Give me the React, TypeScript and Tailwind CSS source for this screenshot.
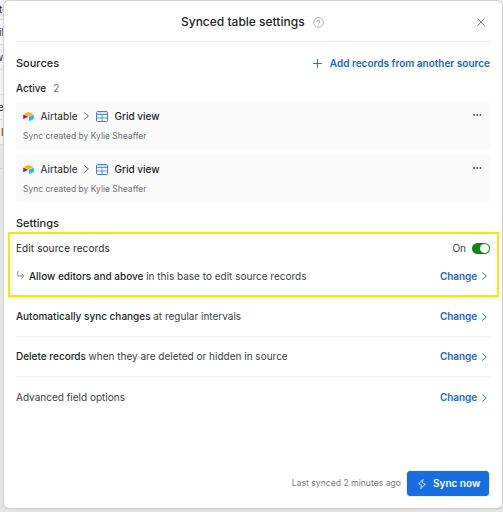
import React from 'react';

interface SourceCardProps {
  base: string;
  view: string;
  author: string;
}

interface SettingRowProps {
  strong?: string;
  text: string;
}

const gridRows = [
  { id: 1, text: 'to', cell: 'h-[20px] -ml-px' },
  { id: 2, text: 'il', cell: 'h-[25px] -ml-px' },
  { id: 3, text: 'w', cell: 'h-[25px] -ml-[5px]' },
  { id: 4, text: '', cell: 'h-[25px]' },
  { id: 5, text: 'e', cell: 'h-[25px] -ml-[2px]' },
  { id: 6, text: 'l', cell: 'h-[25px] pl-px' },
];

const AirtableLogo: React.FC = () => (
  <svg className="w-[11px] h-[9px]" viewBox="0 0 200 170">
    <path fill="#fcb400" d="M90 4 16 35c-4 2-4 8 0 9l75 30c6 3 14 3 20 0l75-30c4-1 4-7 0-9L111 4c-7-3-14-3-21 0" />
    <path fill="#18bfff" d="M106 89v74c0 4 3 6 7 5l83-33c2-1 4-3 4-5V56c0-4-4-6-7-5l-83 33c-2 1-4 3-4 5" />
    <path fill="#dc0436" d="m88 93-25 12-55 26c-3 2-8 0-8-4V57c0-4 5-7 9-5l77 32c5 2 6 7 2 9" />
  </svg>
);

const GridIcon: React.FC = () => (
  <svg className="w-3 h-[11px]" viewBox="0 0 12 11" fill="none" stroke="#3b82dc">
    <path d="M.6.6h10.8v3H.6z" fill="#cfe3fb" stroke="none" />
    <rect x=".5" y=".5" width="11" height="10" rx="1" />
    <path d="M.6 3.5h10.8M.6 7h10.8M6 3.7v6.7" strokeWidth=".8" />
  </svg>
);

const Chevron: React.FC<{ className?: string }> = ({ className }) => (
  <svg className={`w-[5px] h-2 ${className}`} viewBox="0 0 5 8" fill="none" stroke="currentColor" strokeWidth=".9" strokeLinecap="round" strokeLinejoin="round">
    <path d="M.6.7 4.3 4 .6 7.3" />
  </svg>
);

const SourceCard: React.FC<SourceCardProps> = ({ base, view, author }) => (
  <div className="h-[47px] px-[7px] pt-[6px] rounded-[2px] bg-[#fafafa]">
    <div className="flex items-center h-4">
      <AirtableLogo />
      <span className="ml-[6.5px] w-[37px] text-[10px] tracking-[0.05px] text-[#1d1f25]">{base}</span>
      <Chevron className="ml-[6.5px] text-[#555]" />
      <span className="ml-[7px]"><GridIcon /></span>
      <span className="ml-[6.5px] text-[10px] font-medium text-[#1d1f25]">{view}</span>
      <button className="ml-auto mb-[3px] mr-px">
        <svg className="w-[9px] h-[2px]" viewBox="0 0 9 2" fill="#333">
          <path d="M.2.2h1.6v1.6H.2zM3.5.2h1.6v1.6H3.5zM6.6.2h1.6v1.6H6.6z" />
        </svg>
      </button>
    </div>
    <p className="mt-[6px] leading-[13px] text-[8.5px] text-[#707276]">Sync created by {author}</p>
  </div>
);

const ChangeButton: React.FC = () => (
  <button className="flex items-center ml-auto mr-[3.5px] text-[10px] font-semibold tracking-[-0.1px] text-[#1566cf]">
    Change
    <Chevron className="ml-[4.5px]" />
  </button>
);

const SettingRow: React.FC<SettingRowProps> = ({ strong, text }) => (
  <div className="flex items-center flex-1 text-[10px] text-[#3c3e43]">
    <p>
      {strong && <span className="font-medium text-[#1d1f25]">{strong} </span>}
      {text}
    </p>
    <ChangeButton />
  </div>
);

const App: React.FC = () => {
  return (
    <div className="relative w-[503px] h-[512px] overflow-hidden bg-[#e6e6e6] font-['Inter',sans-serif] text-[#1d1f25]">
      {/* Table behind the dialog */}
      <div className="bg-[#f2f2f2]">
        {gridRows.map(row => (
          <div key={row.id} className={`flex items-center border-b border-[#dcdcdc] text-[10px] ${row.cell}`}>
            {row.text}
          </div>
        ))}
      </div>
      <div className="h-6 border-b border-[#d4d4d4]" />

      {/* Dialog */}
      <div className="absolute left-1 top-px w-[498px] h-[507px] flex flex-col rounded-[5px] bg-white shadow-[0_0_0_1px_#d2d2d2,0_1px_2px_#bbb]">
        <header className="relative flex items-center h-[41px] mx-3 pt-[2px] border-b border-[#ebebeb]">
          <h1 className="ml-[165px] text-[12px] font-medium">Synced table settings</h1>
          <svg className="ml-[8px] w-[11px] h-[11px]" viewBox="0 0 11 11" fill="none" stroke="#999" strokeWidth=".8">
            <circle cx="5.5" cy="5.5" r="4.8" />
            <path d="M4.1 4.5c0-2 2.8-1.9 2.8-.2 0 1.1-1.4 1-1.4 2.1M5.5 7.4v.9" />
          </svg>
          <svg className="ml-auto mr-[5.5px] w-2 h-2" viewBox="0 0 8 8" fill="none" stroke="#777" strokeWidth=".9">
            <path d="m.3.3 7.4 7.4M7.7.3.3 7.7" />
          </svg>
        </header>

        <div className="flex items-center justify-between h-[43px] px-3">
          <h2 className="text-[11px] font-medium">Sources</h2>
          <button className="flex items-center text-[10px] font-semibold text-[#1566cf]">
            <svg className="mr-[8px] w-[9px] h-[9px]" viewBox="0 0 9 9" stroke="currentColor" strokeWidth=".9">
              <path d="M4.5 0v9M0 4.5h9" />
            </svg>
            Add records from another source
          </button>
        </div>

        <div className="flex gap-[7px] h-[17px] px-3 leading-[7px] text-[10px]">
          <span className="font-medium">Active</span>
          <span className="text-[#707276]">2</span>
        </div>

        <div className="flex flex-col gap-[6px] px-3">
          <SourceCard base="Airtable" view="Grid view" author="Kylie Sheaffer" />
          <SourceCard base="Airtable" view="Grid view" author="Kylie Sheaffer" />
        </div>

        <h2 className="flex items-center h-[30px] px-3 pt-[12px] text-[11px] font-medium">Settings</h2>

        <section className="flex flex-col h-[65px] ml-1 mr-[3px] pl-[6px] pr-[7px] border-2 border-[#ffe600]">
          <div className="flex items-center h-7 pt-px text-[10px]">
            <span className="tracking-[0.1px] text-[#27292e]">Edit source records</span>
            <span className="ml-auto text-[#3c3e43]">On</span>
            <span className="ml-[6px] flex items-center justify-end w-[18px] h-[11px] p-[1px] rounded-full bg-[#078a12]">
              <span className="w-[9px] h-[9px] rounded-full bg-white" />
            </span>
          </div>
          <div className="flex h-[28px]">
            <svg className="mt-[9px] ml-px mr-[4px] w-2 h-2 shrink-0" viewBox="0 0 8 8" fill="none" stroke="#777" strokeWidth=".8">
              <path d="M.9 0v5h5.7M4.6 2.8 6.8 5 4.6 7.2" />
            </svg>
            <SettingRow strong="Allow editors and above" text="in this base to edit source records" />
          </div>
        </section>

        <div className="flex flex-col mx-3">
          <div className="flex h-[40px] border-b border-[#f0f0f0]"><SettingRow strong="Automatically sync changes" text="at regular intervals" /></div>
          <div className="flex h-[40px] border-b border-[#f0f0f0]"><SettingRow strong="Delete records" text="when they are deleted or hidden in source" /></div>
          <div className="flex h-[41px]"><SettingRow text="Advanced field options" /></div>
        </div>

        <footer className="flex items-center justify-end mt-auto mb-[12px] pl-3 pr-[13px]">
          <span className="mr-[6px] text-[8.65px] text-[#7a7c80]">Last synced 2 minutes ago</span>
          <button className="flex items-center h-[25px] w-[82px] pl-[11px] rounded-[4px] bg-[#166ee1] text-[10px] font-semibold text-white shadow-[0_0_1px_#166ee1]">
            <svg className="mr-[7px] w-2 h-[10px]" viewBox="0 0 8 10" fill="none" stroke="currentColor" strokeWidth=".8" strokeLinejoin="round">
              <path d="M4.9.5.6 5l2.9 1.2-.6 3.3L7.3 5 4.3 3.8z" />
            </svg>
            Sync now
          </button>
        </footer>
      </div>
    </div>
  );
};

export default App;
